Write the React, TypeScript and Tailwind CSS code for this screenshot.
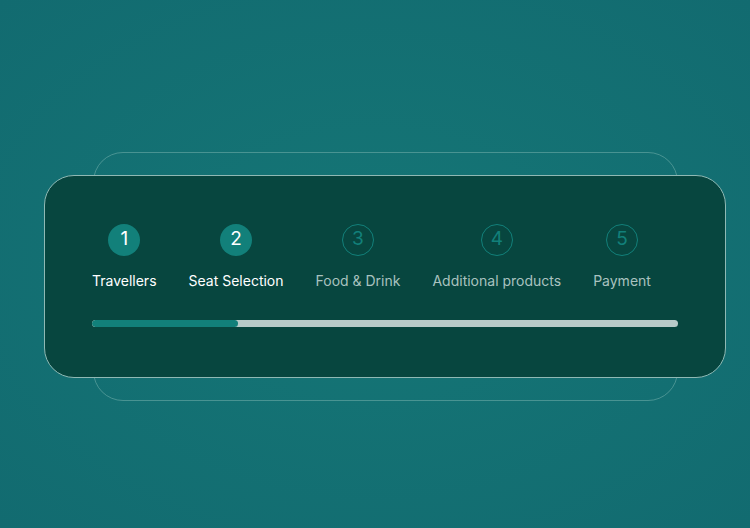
const steps = [
  { n: 1, label: 'Travellers', done: true },
  { n: 2, label: 'Seat Selection', done: true },
  { n: 3, label: 'Food & Drink', done: false },
  { n: 4, label: 'Additional products', done: false },
  { n: 5, label: 'Payment', done: false },
];

export default function App() {
  return (
    <div
      className="w-[750px] h-[528px] flex items-center justify-center bg-[radial-gradient(ellipse_at_center,#157676_0%,#126b70_100%)]"
      style={{ fontFamily: 'Inter, "Noto Sans", sans-serif' }}
    >
      <div className="relative w-[682px] h-[203px] mt-[24px] ml-[20px]">
        {/* back card */}
        <div className="absolute left-[49px] right-[48px] -top-[23px] -bottom-[23px] rounded-[30px] border border-[#5fa3a0]/70" />
        {/* front card */}
        <div className="relative h-full rounded-[30px] border border-[#8fb9b4] bg-[#07463f] px-[47px] pt-[48px]">
          <div className="flex gap-8">
            {steps.map((s) => (
              <div key={s.n} className="flex flex-col items-center">
                <div
                  className={
                    s.done
                      ? 'w-8 h-8 rounded-full bg-[#12807a] text-white flex items-center justify-center text-[19px]'
                      : 'w-8 h-8 rounded-full border border-[#12807a] text-[#12807a] flex items-center justify-center text-[19px]'
                  }
                >
                  {s.n}
                </div>
                <div
                  className={
                    s.done
                      ? 'mt-[14px] text-[14px] text-white whitespace-nowrap'
                      : 'mt-[14px] text-[14px] text-[#a9c2bf] whitespace-nowrap'
                  }
                >
                  {s.label}
                </div>
              </div>
            ))}
          </div>
          <div className="mt-[29px] h-[7px] rounded-full bg-[#b8cbc9] overflow-hidden">
            <div className="h-full w-[146px] rounded-full bg-[#12807a]" />
          </div>
        </div>
      </div>
    </div>
  );
}
